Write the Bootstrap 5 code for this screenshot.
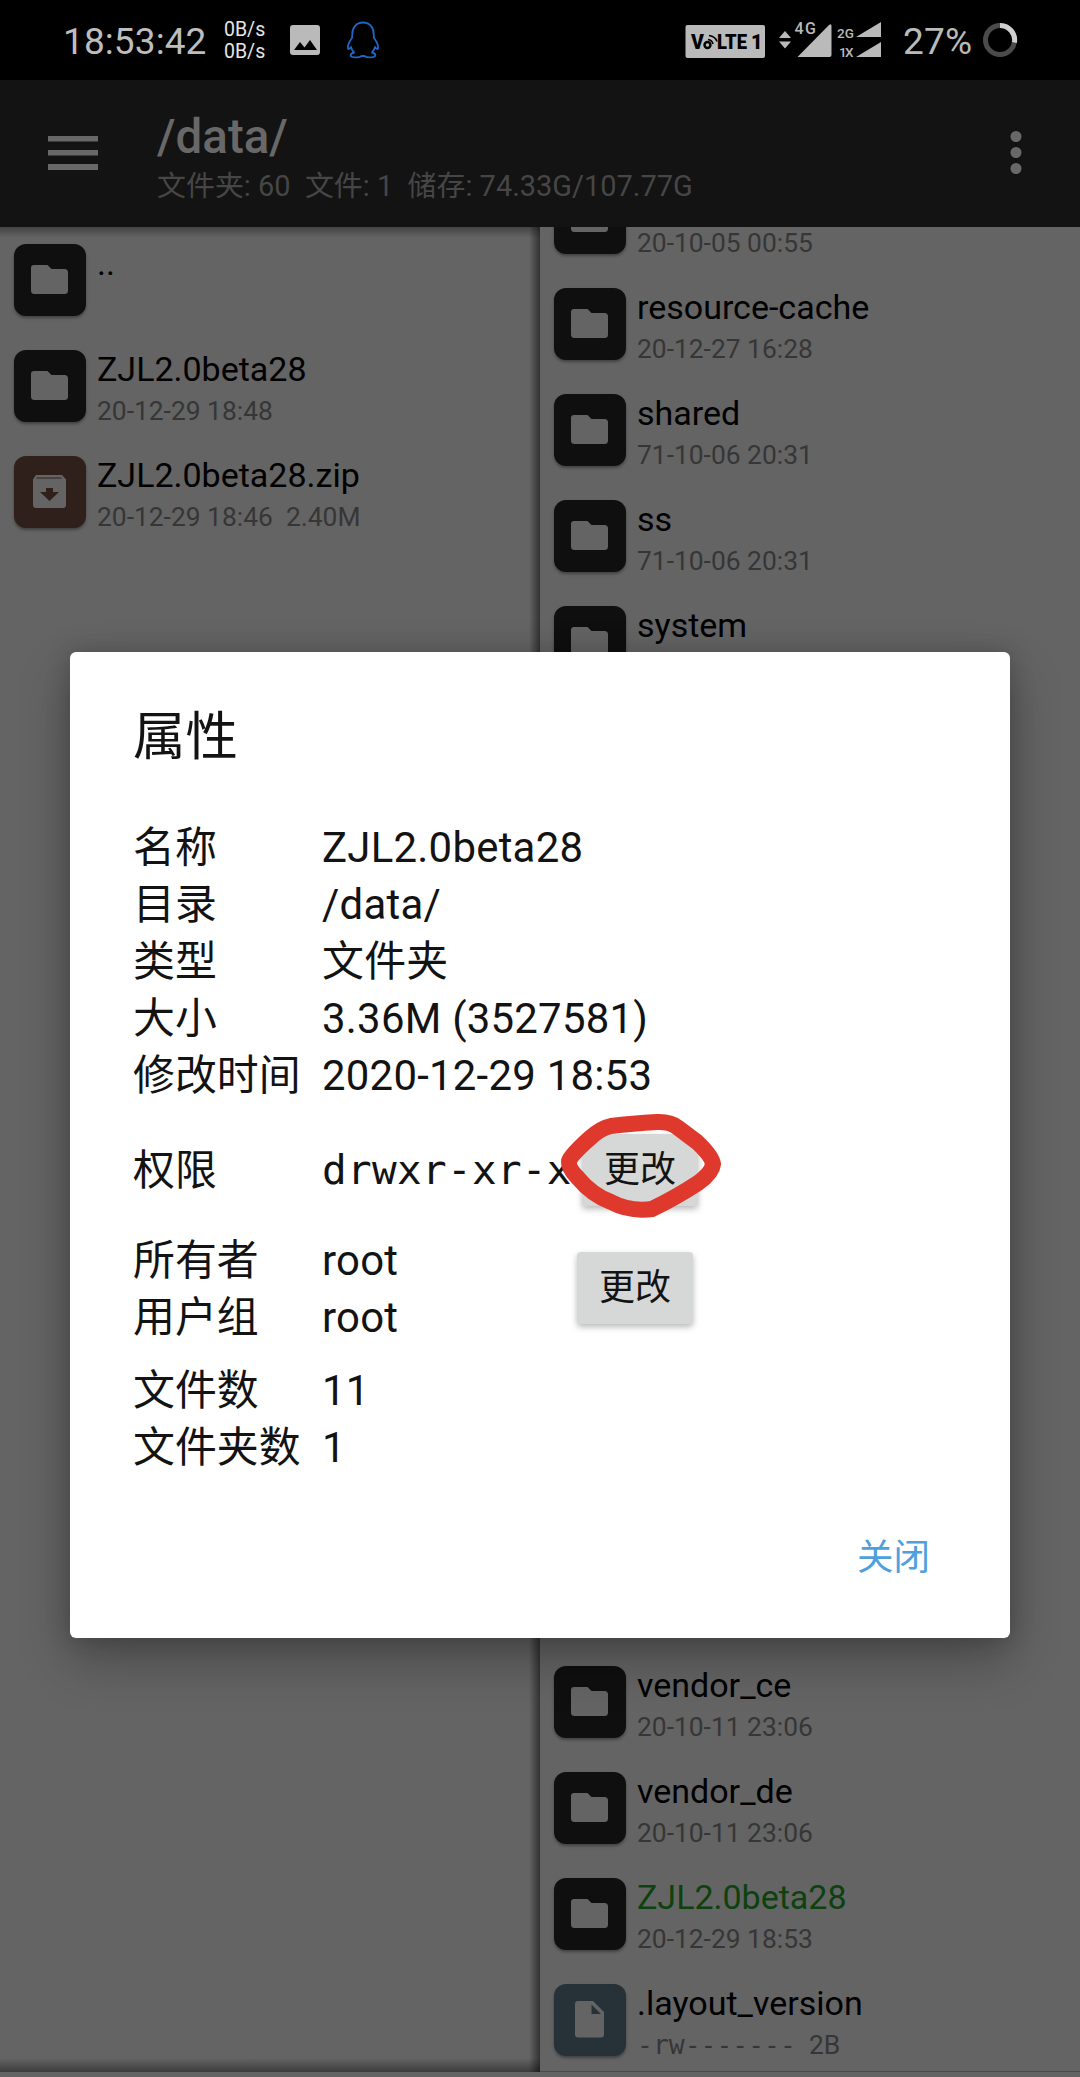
<!DOCTYPE html>
<html lang="zh-CN">
<head>
<meta charset="utf-8">
<title>/data/</title>
<link rel="stylesheet" href="https://cdn.jsdelivr.net/npm/bootstrap@5.3.0/dist/css/bootstrap.min.css">
<style>
body{margin:0;background:#646464;font-family:Roboto,"Noto Sans CJK SC",sans-serif;color:#000}
svg{display:block;flex:none}
.screen{width:1080px;height:2077px}
.statusbar{height:80px;background:#000;color:#bdbdbd;padding-left:63px}
.clock{font-size:37px;line-height:80px;width:161px;margin-top:3px;letter-spacing:.1px}
.netspeed{font-size:19.5px;line-height:22px;color:#e6e6e6;width:66px;padding-top:2px}
.appbar{height:147px;background:#131313;padding-left:48px;padding-right:58px}
.path{font-size:47.5px;font-weight:500;line-height:54px;color:#686868;margin-top:30px}
.summary{font-size:28.95px;line-height:40px;color:#464646;white-space:pre;margin-top:2px}
.panes{height:1845px}
.pane{width:540px;overflow:hidden;background-color:#646464}
.pane-left{padding:17px 0 0 14px;
  background-image:linear-gradient(to bottom,rgba(0,0,0,.32),transparent),linear-gradient(to top,rgba(0,0,0,.4),transparent),linear-gradient(to left,rgba(0,0,0,.5),transparent);
  background-size:100% 11px,100% 14px,11px 100%;background-position:top,bottom,right;background-repeat:no-repeat}
.pane-right{padding-left:14px;border-bottom:1px solid #4b4b4b}
.pane-right .entries{margin-top:-45px}
.entry{height:106px;gap:11px}
.entry-cut{padding-top:45px}
.skipped{height:954px}
.tile{width:72px;height:72px;border-radius:12px;background:#0f0f0f;box-shadow:0 2px 3px rgba(0,0,0,.35);flex:none}
.tile-zip{background:#2f201c}
.tile-doc{background:#263238}
.fname{font-size:34px;line-height:40px;margin-top:-1px}
.fmeta{font-size:26.4px;line-height:32px;margin-top:6px;color:#363636;white-space:pre}
.fmode{font-family:"DejaVu Sans Mono",monospace;font-size:26.4px;line-height:32px}
.fname-new{color:#0d420f}
.sheet-layer{padding-top:652px}
.sheet{width:940px;height:986px;background:#fff;border-radius:6px;padding:0 64px 0 63px;color:#131313;box-shadow:0 22px 50px rgba(0,0,0,.28),0 0 24px rgba(0,0,0,.18)}
.sheet-title{font-size:52.5px;line-height:76px;margin-top:47px;margin-bottom:44px;font-weight:400}
.prop{font-size:41.9px;line-height:57px}
.prop-key{width:189px;flex:none}
.prop-val{letter-spacing:.25px}
.perm{height:133px}
.perm .prop-val{width:260px;font-family:"DejaVu Sans Mono",monospace;font-size:41px;letter-spacing:.3px}
.owner{margin-top:-5px}
.owner .prop-list{width:444px}
.btn-change{width:116px;height:72px;background:#d6d8d7;border:0;border-radius:4px;padding:0;font-size:36px;line-height:70px;color:#131313;box-shadow:0 3px 6px rgba(0,0,0,.28);white-space:nowrap}
.perm .btn-change{margin-top:-2px}
.owner .btn-change{margin-top:-3px}
.counts{margin-top:16px}
.btn-close-sheet{font-size:36.5px;color:#4da0dc;padding:0;line-height:50px;margin-top:57px;margin-right:16px;border:0}
.ring-mark{left:556px;top:1108px}
</style>
<script src="https://cdn.jsdelivr.net/npm/bootstrap@5.3.0/dist/js/bootstrap.bundle.min.js"></script>
</head>
<body>
<svg width="0" height="0" class="position-absolute">
<symbol id="folder" viewBox="0 0 72 72"><path fill="#646464" d="M20 21h13.500l4 4H50.500a3.500 3.500 0 0 1 3.500 3.500V46.500a3.500 3.500 0 0 1-3.500 3.500H20.500a3.500 3.500 0 0 1-3.500-3.500V24a3 3 0 0 1 3-3z"/></symbol>
</svg>
<div class="screen position-relative overflow-hidden">
  <header class="statusbar d-flex align-items-center">
    <div class="clock">18:53:42</div>
    <div class="netspeed">0B/s<br>0B/s</div>
    <svg width="30" height="30" viewBox="0 0 30 30"><rect width="30" height="30" rx="3" fill="#bababa"/><path d="M4 25l6-8 4.500 5.500L20 15l7 10z" fill="#000"/></svg>
    <svg class="ms-4" width="38" height="40" viewBox="0 0 38 40" fill="none" stroke="#1f66c4" stroke-width="1.800" stroke-linejoin="round" stroke-linecap="round"><path d="M19 2.500C12 2.500 8 8 8.300 14.500L8 18C5 22 3.500 26 4 28.500c.5 1.500 2 0 3-1.500.5 2.500 1.500 4 3 5.500-2.500.6-3.500 2-3.300 3.200.3 2 8.500 2.500 11 .3h2.600c2.500 2.200 10.700 1.700 11-.3.200-1.200-.8-2.600-3.300-3.200 1.500-1.500 2.500-3 3-5.500 1 1.500 2.500 3 3 1.500.5-2.500-1-6.500-4-10.500l-.3-3.500C30 8 26 2.500 19 2.500z"/></svg>
    <svg class="ms-auto" width="396" height="80" viewBox="684 0 396 80" font-family="Roboto, sans-serif" fill="#bababa">
      <rect x="685.500" y="25" width="79.500" height="33" rx="2"/>
      <g fill="#000" font-weight="900" font-size="20"><text x="691" y="49" font-size="19.500">V</text><text x="717" y="49" textLength="30" lengthAdjust="spacingAndGlyphs">LTE</text><text x="751" y="49">1</text></g>
      <circle cx="707.500" cy="45" r="3" fill="none" stroke="#000" stroke-width="2.400"/>
      <path d="M708 39.500q4 .5 5 4.500M709 35.500q6.500 1 8 6" fill="none" stroke="#000" stroke-width="1.600"/>
      <path d="M779 38l6-7 6 7zM779 41.500l6 7 6-7z"/>
      <text x="794.500" y="34" font-size="16" font-weight="500" textLength="21.500">4G</text>
      <path d="M797.500 57L829 25q2.500-2 2.500 1v29q0 2-2 2z"/>
      <text x="837" y="37.500" font-size="13.500" font-weight="500" textLength="17">2G</text><text x="839" y="57" font-size="13.500" font-weight="500" textLength="14.500">1X</text>
      <path d="M856 37l25-15v15zM856 57l25-15v15z"/>
      <text x="903" y="54" font-size="37" textLength="69">27%</text>
      <g fill="none" stroke-width="5"><circle cx="1000" cy="40" r="14.500" stroke="#4b4b4b"/><path d="M1000 25.500a14.500 14.500 0 0 1 14.400 17" stroke="#d0d0d0"/></g>
    </svg>
  </header>
  <nav class="appbar d-flex">
    <svg width="109" height="147" viewBox="0 0 109 147" fill="#686868"><path d="M0 56h50v5.600H0zM0 70h50v5.600H0zM0 84h50v6H0z"/></svg>
    <div class="flex-grow-1">
      <div class="path">/data/</div>
      <div class="summary">文件夹: 60  文件: 1  储存: 74.33G/107.77G</div>
    </div>
    <svg width="12" height="147" viewBox="0 0 12 147" fill="#686868"><circle cx="6" cy="56.500" r="5.500"/><circle cx="6" cy="72.500" r="5.500"/><circle cx="6" cy="88.500" r="5.500"/></svg>
  </nav>
  <main class="panes d-flex">
    <section class="pane pane-left">
      <div class="entry d-flex"><div class="tile"><svg width="72" height="72"><use href="#folder"/></svg></div><div><div class="fname">..</div></div></div>
      <div class="entry d-flex"><div class="tile"><svg width="72" height="72"><use href="#folder"/></svg></div><div><div class="fname">ZJL2.0beta28</div><div class="fmeta">20-12-29 18:48</div></div></div>
      <div class="entry d-flex"><div class="tile tile-zip"><svg width="72" height="72" viewBox="0 0 72 72"><path fill="#646464" d="M22 19h26l4 4.500V49q0 3-3 3H22q-3 0-3-3V23.500z"/><path d="M23 21.500h24l1 1H22zM32 32h7v4h6L35.500 45 26 36h6z" fill="#2f201c"/></svg></div><div><div class="fname">ZJL2.0beta28.zip</div><div class="fmeta">20-12-29 18:46  2.40M</div></div></div>
    </section>
    <section class="pane pane-right">
      <div class="entries">
      <div class="entry d-flex"><div class="tile"><svg width="72" height="72"><use href="#folder"/></svg></div><div class="entry-cut"><div class="fmeta mt-0">20-10-05 00:55</div></div></div>
      <div class="entry d-flex"><div class="tile"><svg width="72" height="72"><use href="#folder"/></svg></div><div><div class="fname">resource-cache</div><div class="fmeta">20-12-27 16:28</div></div></div>
      <div class="entry d-flex"><div class="tile"><svg width="72" height="72"><use href="#folder"/></svg></div><div><div class="fname">shared</div><div class="fmeta">71-10-06 20:31</div></div></div>
      <div class="entry d-flex"><div class="tile"><svg width="72" height="72"><use href="#folder"/></svg></div><div><div class="fname">ss</div><div class="fmeta">71-10-06 20:31</div></div></div>
      <div class="entry d-flex"><div class="tile"><svg width="72" height="72"><use href="#folder"/></svg></div><div><div class="fname">system</div></div></div>
      <div class="skipped"></div>
      <div class="entry d-flex"><div class="tile"><svg width="72" height="72"><use href="#folder"/></svg></div><div><div class="fname">vendor_ce</div><div class="fmeta">20-10-11 23:06</div></div></div>
      <div class="entry d-flex"><div class="tile"><svg width="72" height="72"><use href="#folder"/></svg></div><div><div class="fname">vendor_de</div><div class="fmeta">20-10-11 23:06</div></div></div>
      <div class="entry d-flex"><div class="tile"><svg width="72" height="72"><use href="#folder"/></svg></div><div><div class="fname fname-new">ZJL2.0beta28</div><div class="fmeta">20-12-29 18:53</div></div></div>
      <div class="entry d-flex"><div class="tile tile-doc"><svg width="72" height="72" viewBox="0 0 72 72"><path fill="#646464" d="M24 17h15l11 11v22.500a3 3 0 0 1-3 3H24a3 3 0 0 1-3-3V20a3 3 0 0 1 3-3z"/><path d="M37.500 20.500V30H47z" fill="#263238"/></svg></div><div><div class="fname">.layout_version</div><div class="fmeta"><span class="fmode">-rw-------</span>  2B</div></div></div>
      </div>
    </section>
  </main>

  <div class="sheet-layer position-absolute top-0 start-0 w-100 d-flex justify-content-center">
    <div class="sheet d-flex flex-column" role="dialog">
      <h2 class="sheet-title">属性</h2>
      <div class="prop d-flex"><div class="prop-key">名称</div><div class="prop-val">ZJL2.0beta28</div></div>
      <div class="prop d-flex"><div class="prop-key">目录</div><div class="prop-val">/data/</div></div>
      <div class="prop d-flex"><div class="prop-key">类型</div><div class="prop-val">文件夹</div></div>
      <div class="prop d-flex"><div class="prop-key">大小</div><div class="prop-val">3.36M (3527581)</div></div>
      <div class="prop d-flex"><div class="prop-key">修改时间</div><div class="prop-val">2020-12-29 18:53</div></div>
      <div class="prop perm d-flex align-items-center"><div class="prop-key">权限</div><div class="prop-val">drwxr-xr-x</div><button class="btn btn-change">更改</button></div>
      <div class="owner d-flex align-items-center">
        <div class="prop-list">
          <div class="prop d-flex"><div class="prop-key">所有者</div><div class="prop-val">root</div></div>
          <div class="prop d-flex"><div class="prop-key">用户组</div><div class="prop-val">root</div></div>
        </div>
        <button class="btn btn-change">更改</button>
      </div>
      <div class="counts">
        <div class="prop d-flex"><div class="prop-key">文件数</div><div class="prop-val">11</div></div>
        <div class="prop d-flex"><div class="prop-key">文件夹数</div><div class="prop-val">1</div></div>
      </div>
      <button class="btn btn-close-sheet align-self-end">关闭</button>
    </div>
  </div>
  <svg class="ring-mark position-absolute" width="170" height="115" viewBox="556 1108 170 115" fill="none" stroke="#df382c" stroke-width="16" stroke-linejoin="round"><path d="M569 1161Q571 1155 590 1138Q601 1128 611 1126Q632 1123.500 657 1122Q670 1121.500 677 1127L697 1142Q712 1156 713 1164Q712 1173 698 1183Q675 1198 652 1209Q630 1212 611 1202Q592 1195 578 1178Q568 1168 569 1161z"/></svg>
</div>
</body>
</html>
